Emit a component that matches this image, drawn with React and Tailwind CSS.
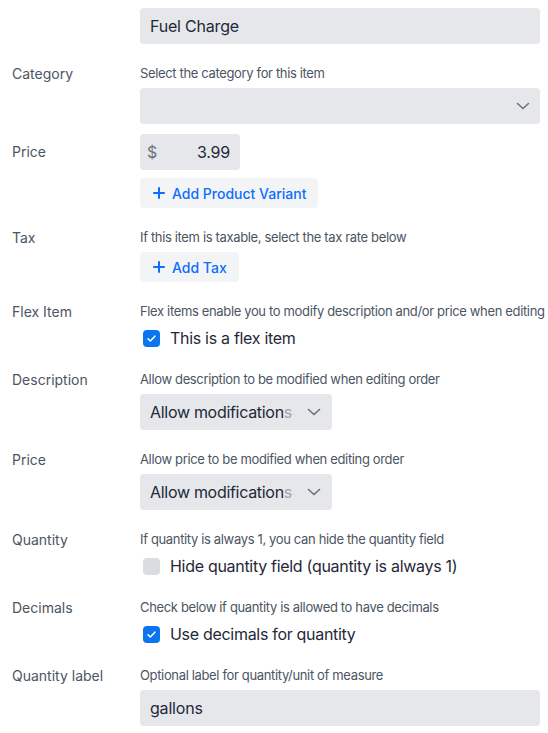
import React from "react";

const font = { fontFamily: "Inter, 'Noto Sans', sans-serif" };

function Chevron({ className = "" }) {
  return (
    <svg width="14" height="10" viewBox="0 0 14 10" fill="none" className={className}>
      <path d="M1.5 2.5l5.5 5 5.5-5" stroke="#6b7280" strokeWidth="1.6" strokeLinecap="round" strokeLinejoin="round" />
    </svg>
  );
}

function Plus() {
  return (
    <svg width="12" height="12" viewBox="0 0 12 12" fill="none">
      <path d="M6 1v10M1 6h10" stroke="#0d6efd" strokeWidth="2" strokeLinecap="round" />
    </svg>
  );
}

function Check({ checked }) {
  return checked ? (
    <div className="w-[17px] h-[17px] rounded-[4px] bg-[#0b74f1] flex items-center justify-center shrink-0">
      <svg width="11" height="11" viewBox="0 0 12 12" fill="none">
        <path d="M2.2 6.3l2.5 2.4 5-5.2" stroke="white" strokeWidth="1.8" strokeLinecap="round" strokeLinejoin="round" />
      </svg>
    </div>
  ) : (
    <div className="w-[17px] h-[17px] rounded-[4px] bg-[#d9dce1] shrink-0" />
  );
}

function Row({ label, children, className = "" }) {
  return (
    <div className={"flex items-start " + className}>
      <div className="w-[128px] shrink-0 text-[14px] leading-[20px] text-[#4b5563]">{label}</div>
      <div className="flex-1 min-w-0">{children}</div>
    </div>
  );
}

function Desc({ children }) {
  return (
    <div className="text-[13px] leading-[18px] tracking-[-0.35px] text-[#4b5563] whitespace-nowrap">{children}</div>
  );
}

function Btn({ children }) {
  return (
    <div className="inline-flex items-center gap-[7px] h-[30px] pl-[13px] pr-[12px] rounded-[4px] bg-[#f3f4f6] text-[14px] font-medium text-[#0d6efd]">
      <Plus />
      <span>{children}</span>
    </div>
  );
}

function ModSelect() {
  return (
    <div className="mt-[6px] w-[192px] h-[36px] rounded-[4px] bg-[#e5e7eb] flex items-center pl-[10px] pr-[10px] overflow-hidden">
      <span className="text-[16px] tracking-[-0.3px] text-[#1f2937] whitespace-nowrap">
        Allow modification<span className="text-[#9ca3af]">s</span>
      </span>
      <Chevron className="ml-[15px] shrink-0" />
    </div>
  );
}

function CheckRow({ checked, children }) {
  return (
    <div className="mt-[6px] h-[24px] flex items-center pl-[3px] gap-[10px]">
      <Check checked={checked} />
      <span className="text-[16px] tracking-[-0.3px] text-[#1f2937] whitespace-nowrap">{children}</span>
    </div>
  );
}

export default function App() {
  return (
    <div style={font} className="w-[548px] h-[733px] bg-white overflow-hidden pl-[12px] pr-[8px] pt-[8px]">
      <Row label="">
        <div className="h-[36px] rounded-[4px] bg-[#e5e7eb] flex items-center px-[10px] text-[16px] tracking-[-0.2px] text-[#1f2937]">
          Fuel Charge
        </div>
      </Row>

      <Row label="Category" className="mt-[20px]">
        <Desc>Select the category for this item</Desc>
        <div className="mt-[6px] h-[36px] rounded-[4px] bg-[#e5e7eb] flex items-center justify-end pr-[10px]">
          <Chevron />
        </div>
      </Row>

      <div className="mt-[10px] flex items-center">
        <div className="w-[128px] shrink-0 text-[14px] leading-[20px] text-[#4b5563]">Price</div>
        <div className="w-[100px] h-[36px] rounded-[4px] bg-[#e5e7eb] flex items-center justify-between pl-[7px] pr-[10px]">
          <span className="text-[16px] text-[#6b7280]">$</span>
          <span className="text-[16px] tracking-[-0.2px] text-[#1f2937]">3.99</span>
        </div>
      </div>
      <div className="mt-[8px] pl-[128px]">
        <Btn>Add Product Variant</Btn>
      </div>

      <Row label="Tax" className="mt-[20px]">
        <Desc>If this item is taxable, select the tax rate below</Desc>
        <div className="mt-[6px]">
          <Btn>Add Tax</Btn>
        </div>
      </Row>

      <Row label="Flex Item" className="mt-[20px]">
        <Desc>Flex items enable you to modify description and/or price when editing order</Desc>
        <CheckRow checked>This is a flex item</CheckRow>
      </Row>

      <Row label="Description" className="mt-[20px]">
        <Desc>Allow description to be modified when editing order</Desc>
        <ModSelect />
      </Row>

      <Row label="Price" className="mt-[20px]">
        <Desc>Allow price to be modified when editing order</Desc>
        <ModSelect />
      </Row>

      <Row label="Quantity" className="mt-[20px]">
        <Desc>If quantity is always 1, you can hide the quantity field</Desc>
        <CheckRow checked={false}>Hide quantity field (quantity is always 1)</CheckRow>
      </Row>

      <Row label="Decimals" className="mt-[20px]">
        <Desc>Check below if quantity is allowed to have decimals</Desc>
        <CheckRow checked>Use decimals for quantity</CheckRow>
      </Row>

      <Row label="Quantity label" className="mt-[20px]">
        <Desc>Optional label for quantity/unit of measure</Desc>
        <div className="mt-[6px] h-[36px] rounded-[4px] bg-[#e5e7eb] flex items-center px-[10px] text-[16px] tracking-[-0.2px] text-[#1f2937]">
          gallons
        </div>
      </Row>
    </div>
  );
}
